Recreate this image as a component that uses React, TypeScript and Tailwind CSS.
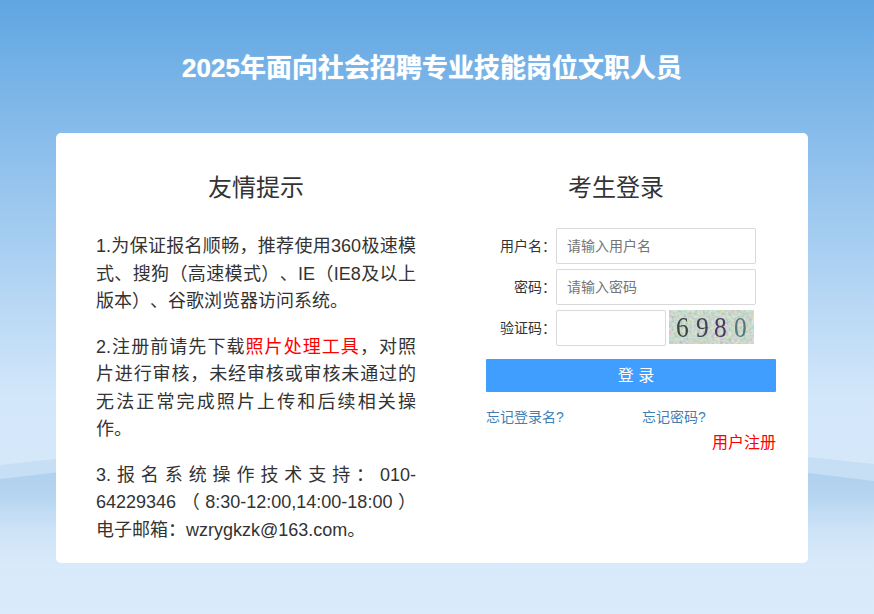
import React from 'react';

const font = { fontFamily: '"Liberation Sans", "Noto Sans CJK SC", sans-serif' };

function Waves() {
  return (
    <svg className="absolute left-0 top-[440px]" width="874" height="174" viewBox="0 0 874 174">
      <defs>
        <linearGradient id="band" gradientUnits="userSpaceOnUse" x1="0" y1="20" x2="0" y2="135">
          <stop offset="0" stopColor="#aed0ed" />
          <stop offset="0.3" stopColor="#b4d4f0" />
          <stop offset="1" stopColor="#d8e9fa" stopOpacity="0" />
        </linearGradient>
      </defs>
      <path d="M0 25 Q437 -26 874 24 L874 60 Q437 15 0 60Z" fill="#c6dff5" />
      <path d="M0 39 Q437 -17 874 41 L874 150 Q437 110 0 150Z" fill="url(#band)" />
    </svg>
  );
}

const digits = [
  { ch: '6', x: 7, fill: '#3a4644' },
  { ch: '9', x: 27, fill: '#3c4456' },
  { ch: '8', x: 45, fill: '#523566' },
  { ch: '0', x: 65, fill: '#55757f' },
];

function Captcha() {
  return (
    <svg width="85" height="34" viewBox="0 0 85 34" className="ml-[3px] shrink-0">
      <defs>
        <filter id="noise" x="0" y="0" width="100%" height="100%">
          <feTurbulence type="fractalNoise" baseFrequency="0.35" numOctaves="3" seed="7" />
          <feColorMatrix values="1.7 0 0 0 -0.05  0 1.2 0 0 0.2  0 0 1.3 0 0.08  0 0 0 0 1" />
          <feGaussianBlur stdDeviation="0.4" />
        </filter>
      </defs>
      <rect width="85" height="34" filter="url(#noise)" />
      <rect width="85" height="34" fill="#abc6b8" opacity="0.45" />
      <g fontFamily='"Liberation Serif", serif' fontSize="30" style={{ filter: 'blur(0.5px)' }}>
        {digits.map((d) => (
          <text key={d.x} transform={`translate(${d.x} 27) scale(0.85 1)`} fill={d.fill}>
            {d.ch}
          </text>
        ))}
      </g>
    </svg>
  );
}

function Row({ label, placeholder }: { label: string; placeholder: string }) {
  return (
    <div className="flex items-center h-9 mb-[5px]">
      <label className="w-[70px] text-right text-sm text-[#333]">{label}</label>
      <input
        placeholder={placeholder}
        className="w-[200px] h-9 border border-[#d9d9d9] rounded-[2px] bg-white px-[10px] text-sm placeholder:text-[#757575] outline-none"
      />
    </div>
  );
}

export default function App() {
  return (
    <div
      className="relative w-full h-[614px] overflow-hidden bg-gradient-to-b from-[#5fa6e2] via-[#d3e7fa] via-65% to-[#daebfb]"
      style={font}
    >
      <Waves />
      <div className="relative flex flex-col">
        <h1
          className="w-[864px] h-[133px] pt-[50px] text-center text-[26px] leading-[36px] font-bold text-white"
          style={{ textShadow: '0 0 1px rgba(255,255,255,0.8)' }}
        >
          2025年面向社会招聘专业技能岗位文职人员
        </h1>
        <div className="ml-[56px] w-[752px] h-[430px] bg-white rounded-[5px] flex">
          <div className="w-[400px] px-[40px] pt-[37px] text-[#333] [text-spacing-trim:space-all]">
            <h2 className="text-2xl leading-9 text-center mb-[27px] font-normal">友情提示</h2>
            <p className="text-[18px] leading-[27.5px] text-justify mb-[18px]">
              1.为保证报名顺畅，推荐使用360极速模式、搜狗（高速模式）、IE（IE8及以上版本）、谷歌浏览器访问系统。
            </p>
            <p className="text-[18px] leading-[27.5px] text-justify mb-[18px]">
              2.注册前请先下载<span className="text-[#f00]">照片处理工具</span>，对照片进行审核，未经审核或审核未通过的无法正常完成照片上传和后续相关操作。
            </p>
            <p className="text-[18px] leading-[27.5px] text-justify">
              3.报名系统操作技术支持：010-64229346（8:30-12:00,14:00-18:00）电子邮箱：wzrygkzk@163.com。
            </p>
          </div>
          <div className="ml-[30px] w-[290px] pt-[37px]">
            <h2 className="pr-[30px] text-2xl leading-9 text-center text-[#333] mb-[22px] font-normal">考生登录</h2>
            <Row label="用户名：" placeholder="请输入用户名" />
            <Row label="密码：" placeholder="请输入密码" />
            <div className="flex items-start h-9">
              <label className="w-[70px] text-right text-sm leading-9 text-[#333]">验证码：</label>
              <input className="w-[110px] h-9 border border-[#d9d9d9] rounded-[2px] bg-white outline-none" />
              <Captcha />
            </div>
            <button className="mt-[13px] w-[290px] h-[33px] pl-[10px] bg-[#409eff] text-white text-base rounded-[1px]">
              登 录
            </button>
            <div className="flex mt-[15px] text-sm leading-5 text-[#3f7fb5]">
              <a className="w-[156px]">忘记登录名?</a>
              <a>忘记密码?</a>
            </div>
            <div className="text-right text-base leading-5 mt-[6px] text-[#f00]">用户注册</div>
          </div>
        </div>
      </div>
    </div>
  );
}
